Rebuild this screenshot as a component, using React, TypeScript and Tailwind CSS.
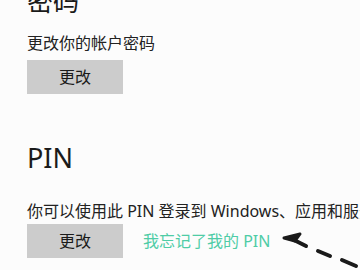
import React from 'react';

const font = { fontFamily: '"Noto Sans", "Noto Sans CJK SC", sans-serif' };

const ChangeButton: React.FC = () => (
  <button className="w-[96px] h-[34px] bg-[#cccccc] text-[16px] text-[#1a1a1a] leading-none">
    更改
  </button>
);

export default function App() {
  return (
    <div
      className="relative w-[360px] h-[270px] overflow-hidden bg-[#fcfcfc] text-[#1a1a1a]"
      style={font}
    >
      <div className="pl-[27px]">
        <h2 className="text-[26px] leading-[32px] -mt-[15px] font-normal">密码</h2>
        <p className="mt-[16px] text-[16px] leading-[20px] text-[#222]">更改你的帐户密码</p>
        <div className="mt-[7px]">
          <ChangeButton />
        </div>

        <h2 className="mt-[48px] text-[27px] leading-[32px] font-normal">PIN</h2>
        <p className="mt-[27px] text-[16px] leading-[20px] whitespace-nowrap text-[#222]">
          你可以使用此 PIN 登录到 Windows、应用和服务
        </p>
        <div className="mt-[3px] flex items-center gap-[20px]">
          <ChangeButton />
          <span className="text-[16px] text-[#4fcca6]">我忘记了我的 PIN</span>
        </div>
      </div>

      <svg
        className="absolute left-[280px] top-[228px]"
        width="80"
        height="42"
        viewBox="0 0 80 42"
      >
        <path d="M4 10 L20 6 L15 13 Z" fill="#1a1a1a" stroke="#1a1a1a" strokeWidth="3" strokeLinejoin="round" />
        <line x1="14" y1="12" x2="26" y2="18" stroke="#1a1a1a" strokeWidth="4" strokeLinecap="round" />
        <line x1="38" y1="23" x2="50" y2="28" stroke="#1a1a1a" strokeWidth="4" strokeLinecap="round" />
        <line x1="62" y1="32" x2="76" y2="38" stroke="#1a1a1a" strokeWidth="4" strokeLinecap="round" />
      </svg>
    </div>
  );
}
